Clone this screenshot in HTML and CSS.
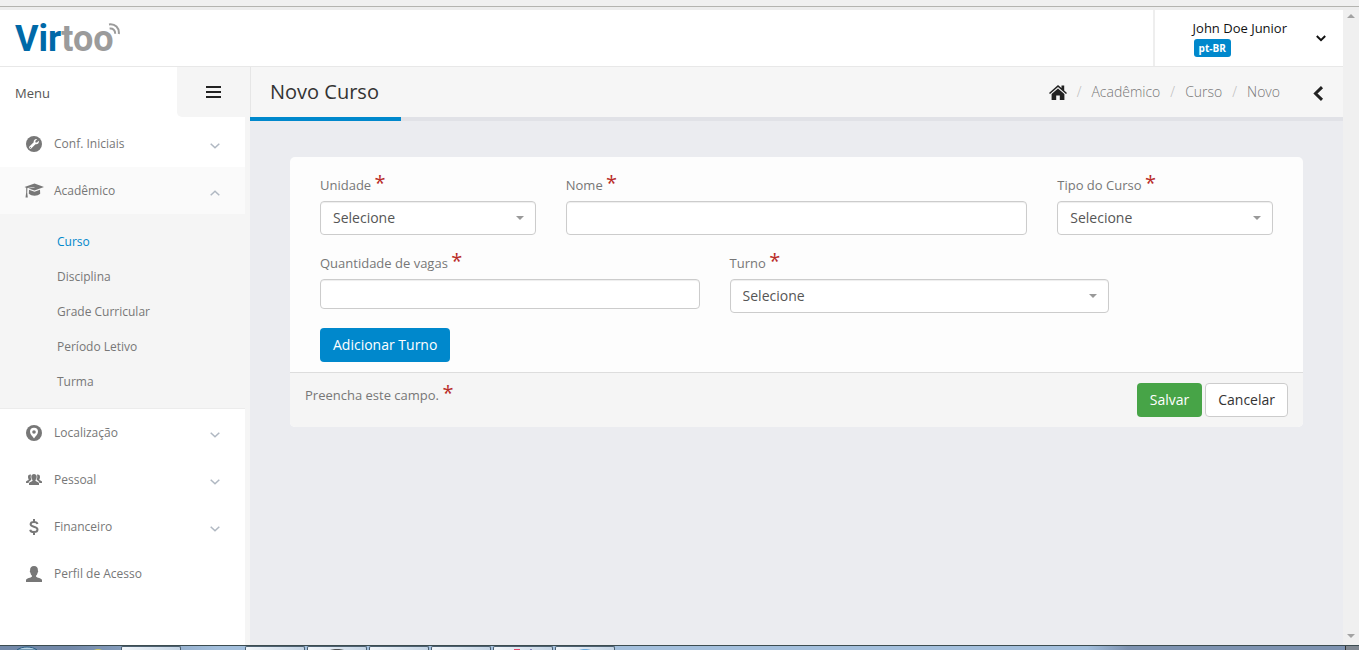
FILE: index.html
```
<!DOCTYPE html>
<html lang="pt-BR">
<head>
<meta charset="utf-8">
<title>Virtoo - Novo Curso</title>
<link rel="stylesheet" href="styles.css">
</head>
<body>
<div class="browser-edge"></div>
<div class="viewport">
  <div class="app">
    <header class="topbar">
      <a class="logo" href="#"><span class="logo-blue">Vir</span><span class="logo-gray">too</span><svg class="logo-waves" width="14" height="14" viewBox="0 0 14 14" fill="none" stroke="#9b9b9b" stroke-width="2"><path d="M2 1.4C8 .4 12.600 5 11.800 11"/><path d="M2.600 5.600C6 5.200 8.400 7.400 8.200 10.800"/></svg></a>
      <div class="user">
        <div class="user-info">
          <span class="user-name">John Doe Junior</span>
          <span class="badge">pt-BR</span>
        </div>
        <button class="icon-button user-toggle" aria-label="Abrir menu do usuário"><svg width="10" height="7" viewBox="0 0 10 7" fill="none" stroke="#111" stroke-width="2"><path d="M.8 1 5 5.200 9.200 1"/></svg></button>
      </div>
    </header>
    <div class="columns">
      <aside class="sidebar">
        <div class="sidebar-head">
          <span class="sidebar-title">Menu</span>
          <button class="sidebar-toggle" aria-label="Alternar menu"><svg width="15" height="12" viewBox="0 0 15 12" fill="#222"><path d="M0 0h15v2H0zM0 5h15v2H0zM0 10h15v2H0z"/></svg></button>
        </div>
        <nav class="menu">
          <a class="menu-item" href="#"><span class="menu-icon"><svg width="16" height="16" viewBox="0 0 16 16"><circle cx="8" cy="8" r="8" fill="#777"/><path d="M12.800 4.700 10.900 6.600 9.500 6.400 9.300 5 11.200 3.100C9.200 2.500 7.300 4.200 7.700 6.300L3.400 10.600C2.300 11.800 4 13.500 5.200 12.400L9.500 8.200C11.700 8.700 13.500 6.700 12.800 4.700Z" fill="#fff"/><circle cx="4.400" cy="11.500" r=".6" fill="#777"/></svg></span><span class="menu-label">Conf. Iniciais</span><svg class="chevron" width="10" height="6" viewBox="0 0 10 6"><path d="M.7.7 5 4.800 9.300.7"/></svg></a>
          <a class="menu-item open" href="#"><span class="menu-icon"><svg width="20" height="15" viewBox="0 0 20 15" fill="#777"><path d="M10.500 .5 20 4 10.500 7.500 4.500 5.500 10.500 4.400V3.900L3.400 5 3.200 9.500 3.800 14.500H1.500L2.200 9.500V4.700L.5 4Z"/><path d="M5 6.800 10.500 8.700 16 6.800 16.200 10.800C13.500 13.400 7.700 13.400 4.800 10.800Z"/></svg></span><span class="menu-label">Acadêmico</span><svg class="chevron" width="10" height="6" viewBox="0 0 10 6"><path d="M.7 5.300 5 1.200 9.300 5.300"/></svg></a>
          <div class="submenu">
            <a class="active" href="#">Curso</a>
            <a href="#">Disciplina</a>
            <a href="#">Grade Curricular</a>
            <a href="#">Período Letivo</a>
            <a href="#">Turma</a>
          </div>
          <a class="menu-item" href="#"><span class="menu-icon"><svg width="16" height="16" viewBox="0 0 16 16"><circle cx="8" cy="8" r="8" fill="#777"/><path d="M8 13.500C7 11.500 4 9.500 4 6.700A4 4 0 0 1 12 6.700C12 9.500 9 11.500 8 13.500Z" fill="#fff"/><circle cx="8" cy="7" r="1.800" fill="#777"/></svg></span><span class="menu-label">Localização</span><svg class="chevron" width="10" height="6" viewBox="0 0 10 6"><path d="M.7.7 5 4.800 9.300.7"/></svg></a>
          <a class="menu-item" href="#"><span class="menu-icon"><svg width="16" height="11" viewBox="0 0 16 11" fill="#777"><path d="M0 9V7.400C.8 6.500 2 6.400 2.700 5.900 2.800 5.300 2 4.500 2 3 2 .7 4 .2 5 .8 4.400 2.800 4.800 4.500 5.400 5.400 4.800 6.600 2.800 6.700 2.500 9ZM16 9V7.400C15.200 6.500 14 6.400 13.300 5.900 13.200 5.300 14 4.500 14 3 14 .7 12 .2 11 .8 11.600 2.800 11.200 4.500 10.600 5.400 11.200 6.600 13.200 6.700 13.500 9Z"/><path d="M3 11V9C4 7.500 6 7.600 6.600 6.700 6.700 5.900 5.300 5 5.300 2.800 5.300-.9 10.700-.9 10.700 2.800 10.700 5 9.300 5.900 9.400 6.700 10 7.600 12 7.500 13 9V11Z"/></svg></span><span class="menu-label">Pessoal</span><svg class="chevron" width="10" height="6" viewBox="0 0 10 6"><path d="M.7.7 5 4.800 9.300.7"/></svg></a>
          <a class="menu-item" href="#"><span class="menu-icon"><svg width="10" height="16" viewBox="0 0 10 16" fill="none" stroke="#777" stroke-width="2"><path d="M8.500 5C8.200 3.400 6.700 2.900 5 2.900 3.100 2.900 1.600 3.700 1.600 5.300 1.600 8.600 8.500 6.900 8.500 10.600 8.500 12.300 7 13.100 5 13.100 3 13.100 1.500 12.300 1.200 10.700M5 0V3M5 13V16"/></svg></span><span class="menu-label">Financeiro</span><svg class="chevron" width="10" height="6" viewBox="0 0 10 6"><path d="M.7.7 5 4.800 9.300.7"/></svg></a>
          <a class="menu-item" href="#"><span class="menu-icon"><svg width="16" height="16" viewBox="0 0 16 16" fill="#777"><path d="M0 16V13.800C1 12 4.800 11.800 5.900 10.800V9.600C4.900 8.700 4.600 7.500 4.500 6.700 3.700 6.400 3.600 4.600 4.100 4.400 3.900 1.700 5.300 0 8 0S12.100 1.700 11.900 4.400C12.400 4.600 12.300 6.400 11.500 6.700 11.400 7.500 11.100 8.700 10.100 9.600V10.800C11.200 11.800 15 12 16 13.800V16Z"/></svg></span><span class="menu-label">Perfil de Acesso</span></a>
        </nav>
      </aside>
      <main class="main">
        <div class="page-head">
          <h1 class="page-title">Novo Curso</h1>
          <nav class="breadcrumb" aria-label="Localização atual">
            <a class="home" href="#" aria-label="Início"><svg width="18" height="15" viewBox="0 0 18 15" fill="#222"><path d="M9 0 12.500 3.100V.6H15.200V5.500L18 8 17 9.100 9 2.100 1 9.100 0 8Z"/><path d="M2.600 8.900 9 3.400 15.400 8.900V15H10.800V10.500H7.200V15H2.600Z"/></svg></a>
            <a href="#">Acadêmico</a>
            <a href="#">Curso</a>
            <span>Novo</span>
          </nav>
          <button class="icon-button panel-toggle" aria-label="Abrir painel"><svg width="11" height="15" viewBox="0 0 11 15" fill="none" stroke="#222" stroke-width="3"><path d="M9 1.200 2.500 7.500 9 13.800"/></svg></button>
        </div>
        <div class="content">
          <form class="card">
            <div class="card-body">
              <div class="field span-3">
                <label for="unidade">Unidade <span class="required">*</span></label>
                <div class="select"><select id="unidade"><option>Selecione</option></select></div>
              </div>
              <div class="field span-6">
                <label for="nome">Nome <span class="required">*</span></label>
                <input class="tall" id="nome" type="text">
              </div>
              <div class="field span-3">
                <label for="tipo">Tipo do Curso <span class="required">*</span></label>
                <div class="select"><select id="tipo"><option>Selecione</option></select></div>
              </div>
              <div class="field span-5">
                <label for="vagas">Quantidade de vagas <span class="required">*</span></label>
                <input id="vagas" type="text">
              </div>
              <div class="field span-5">
                <label for="turno">Turno <span class="required">*</span></label>
                <div class="select"><select id="turno"><option>Selecione</option></select></div>
              </div>
            </div>
            <div class="card-actions">
              <button class="btn btn-primary" type="button">Adicionar Turno</button>
            </div>
            <div class="card-footer">
              <p class="hint">Preencha este campo. <span class="required">*</span></p>
              <button class="btn btn-success" type="submit">Salvar</button>
              <button class="btn btn-default" type="button">Cancelar</button>
            </div>
          </form>
        </div>
      </main>
    </div>
  </div>
  <div class="scrollbar">
    <svg width="8" height="4" viewBox="0 0 8 4" fill="#a3a3a3"><path d="M4 0 8 4H0Z"/></svg>
    <svg width="8" height="4" viewBox="0 0 8 4" fill="#a3a3a3"><path d="M0 0H8L4 4Z"/></svg>
  </div>
</div>
<div class="taskbar">
  <div class="start"><svg width="22" height="4" viewBox="0 0 22 4"><path d="M1 4C6 0 16 0 21 4Z" fill="#b9d3e4" stroke="#2c5f85"/></svg><svg width="8" height="1" viewBox="0 0 8 1"><path d="M0 1C2 0 6 0 8 1Z" fill="#e8d94a"/></svg></div>
  <div class="task"></div>
  <div class="task-space"></div>
  <div class="task"></div>
  <div class="task"><svg width="14" height="1" viewBox="0 0 14 1"><path d="M0 1C3 0 11 0 14 1Z" fill="#222"/></svg></div>
  <div class="task"></div>
  <div class="task"></div>
  <div class="task"><svg width="18" height="1" viewBox="0 0 18 1"><path d="M0 0H6V1H0Z" fill="#e0486a"/><path d="M16 0H18V1H16Z" fill="#8a86c0"/></svg></div>
  <div class="task"><svg width="12" height="1" viewBox="0 0 12 1"><path d="M0 1C3 0 9 0 12 1Z" fill="#4a98d8"/></svg></div>
  <div class="show-desktop"></div>
</div>
</body>
</html>
```

FILE: styles.css
```
* {
  box-sizing: border-box;
}

body {
  margin: 0;
  height: 100vh;
  display: flex;
  flex-direction: column;
  overflow: hidden;
  font-family: "Open Sans", "Noto Sans", sans-serif;
  font-size: 13px;
  line-height: 20px;
  color: #777;
  background: #ebecf0;
}

a {
  color: inherit;
  text-decoration: none;
}

svg {
  display: block;
  flex: none;
}

button,
input,
select {
  font-family: inherit;
}

/* Window frame */
.browser-edge {
  flex: none;
  height: 10px;
  background: linear-gradient(#f0f0f0 6px, #b4b4b0 6px, #b4b4b0 7px, #ededed 7px);
}

.viewport {
  flex: 1;
  min-height: 0;
  display: flex;
}

.app {
  flex: 1;
  min-width: 0;
  display: flex;
  flex-direction: column;
}

.scrollbar {
  flex: none;
  width: 16px;
  padding: 4px 4px 7px;
  display: flex;
  flex-direction: column;
  justify-content: space-between;
  align-items: center;
  background: #f0f0f0;
}

/* Top bar */
.topbar {
  flex: none;
  height: 57px;
  display: flex;
  justify-content: space-between;
  background: #fff;
  border-bottom: 1px solid #e8e8e8;
}

.logo {
  display: flex;
  align-items: center;
  padding: 2px 0 0 15px;
  font-family: Roboto, "Open Sans", sans-serif;
  font-size: 36px;
  font-weight: 700;
  line-height: 56px;
}

.logo-blue {
  color: #0069a8;
}

.logo-gray {
  color: #9b9b9b;
}

.logo-waves {
  align-self: flex-start;
  margin: 11px 0 0 -7px;
}

.user {
  display: flex;
  align-items: center;
  border-left: 2px solid #eee;
  padding: 0 17px 0 38px;
  gap: 29px;
}

.user-info {
  display: flex;
  flex-direction: column;
  align-items: flex-start;
}

.user-name {
  color: #111;
}

.badge {
  padding: 0 5px;
  margin: 1px;
  border-radius: 3px;
  background: #08c;
  color: #fff;
  font-size: 10px;
  font-weight: 700;
  line-height: 18px;
}

.icon-button {
  display: flex;
  padding: 0;
  border: 0;
  background: none;
}

/* Sidebar */
.columns {
  flex: 1;
  min-height: 0;
  display: flex;
}

.sidebar {
  flex: none;
  width: 250px;
  display: flex;
  flex-direction: column;
  background: #fff;
}

.sidebar-head {
  flex: none;
  height: 50px;
  display: flex;
  align-items: center;
  justify-content: space-between;
  padding-left: 15px;
}

.sidebar-title {
  padding-top: 2px;
  color: #555;
}

.sidebar-toggle {
  width: 73px;
  height: 50px;
  padding: 0;
  display: flex;
  align-items: center;
  justify-content: center;
  border: 0;
  border-radius: 0 0 0 5px;
  background: #f5f5f5;
}

.menu {
  flex: 1;
  padding-top: 3px;
  border-right: 5px solid #f5f5f5;
  font-size: 12px;
}

.menu-item {
  height: 47px;
  display: flex;
  align-items: center;
  padding: 0 25px 0 24px;
}

.menu-item.open {
  background: #fafafa;
}

.menu-icon {
  width: 20px;
  margin-right: 10px;
  display: flex;
  justify-content: center;
}

.menu-icon svg {
  overflow: visible;
}

.menu-label {
  flex: 1;
}

.chevron {
  margin-top: 4px;
  fill: none;
  stroke: #b0b8c2;
  stroke-width: 1.5;
}

.submenu {
  display: flex;
  flex-direction: column;
  padding: 10px 0 9px 57px;
  background: #f5f5f5;
  border-bottom: 1px solid #ececec;
  line-height: 35px;
}

.submenu .active {
  color: #08c;
}

/* Page heading */
.main {
  flex: 1;
  min-width: 0;
}

.page-head {
  display: flex;
  align-items: center;
  height: 54px;
  padding-right: 19px;
  background: #f6f6f6;
  border-bottom: 4px solid #e1e2e7;
  box-shadow: inset 1px 0 #e6e6e6;
}

.page-title {
  align-self: stretch;
  margin: 0 auto -4px 0;
  padding: 0 22px 0 20px;
  border-bottom: 4px solid #08c;
  color: #333;
  font-size: 20px;
  font-weight: 400;
  line-height: 50px;
}

.breadcrumb {
  display: flex;
  align-items: center;
  margin-right: 33px;
  font-size: 14px;
  font-weight: 300;
}

.breadcrumb > * + *::before {
  content: "/";
  padding: 0 10px;
  color: #bbb;
}

.panel-toggle {
  padding-top: 2px;
}

/* Form card */
.content {
  padding: 36px 40px;
}

.card {
  border-radius: 5px;
  background: #fdfdfd;
  overflow: hidden;
}

.card-body {
  display: grid;
  grid-template-columns: repeat(12, minmax(0, 1fr));
  gap: 16px 30px;
  padding: 16px 30px 15px;
}

.span-3 {
  grid-column: span 3;
}

.span-5 {
  grid-column: span 5;
}

.span-6 {
  grid-column: span 6;
}

.field label {
  display: block;
  height: 28px;
  line-height: 22px;
}

.required {
  color: #b92c28;
  font-size: 20px;
  line-height: 1;
}

.field input,
.field select {
  display: block;
  width: 100%;
  height: 30px;
  padding: 0 12px;
  border: 1px solid #ccc;
  border-radius: 4px;
  background: #fff;
  box-shadow: inset 0 1px 1px #eee;
  color: #555;
  font-size: 14px;
}

.field select,
.field .tall {
  height: 34px;
}

.field select {
  appearance: none;
  padding-bottom: 2px;
}

.select {
  position: relative;
}

.select::after {
  content: "";
  position: absolute;
  top: 15px;
  right: 12px;
  border: 4px solid transparent;
  border-top-color: #999;
  border-bottom: 0;
  pointer-events: none;
}

.card-actions {
  padding: 0 30px 10px;
}

.card-footer {
  display: flex;
  align-items: flex-start;
  gap: 3px;
  padding: 10px 15px;
  border-top: 1px solid #ddd;
  background: #f5f5f5;
}

.hint {
  margin: 0 auto 0 0;
  line-height: 22px;
}

.btn {
  display: block;
  height: 34px;
  padding: 0 12px;
  border: 1px solid transparent;
  border-radius: 4px;
  font-size: 14px;
  line-height: 20px;
}

.btn-primary {
  background: #08c;
  color: #fff;
}

.btn-success {
  background: #47a447;
  color: #fff;
}

.btn-default {
  background: #fff;
  border-color: #ccc;
  color: #333;
}

/* Desktop taskbar */
.taskbar {
  flex: none;
  height: 5px;
  display: flex;
  gap: 2px;
  border-top: 1px solid #3c4c50;
  background: linear-gradient(90deg, #7288a8, #7288a8 5%, #a3bfdc 16%, #a3bfdc 80%, #7d92b0 83%, #7d92b0);
}

.start {
  width: 119px;
  display: flex;
  align-items: flex-end;
  gap: 56px;
  padding-left: 16px;
}

.task {
  width: 60px;
  display: flex;
  align-items: flex-end;
  justify-content: center;
  border: 1px solid #4c6070;
  border-bottom: 0;
  border-radius: 2px 2px 0 0;
  background: linear-gradient(90deg, #f2f6fa, #c4d4e4);
}

.task-space {
  width: 60px;
}

.show-desktop {
  width: 14px;
  margin-left: auto;
  border-left: 1px solid #333;
  background: #7f8790;
}
```
